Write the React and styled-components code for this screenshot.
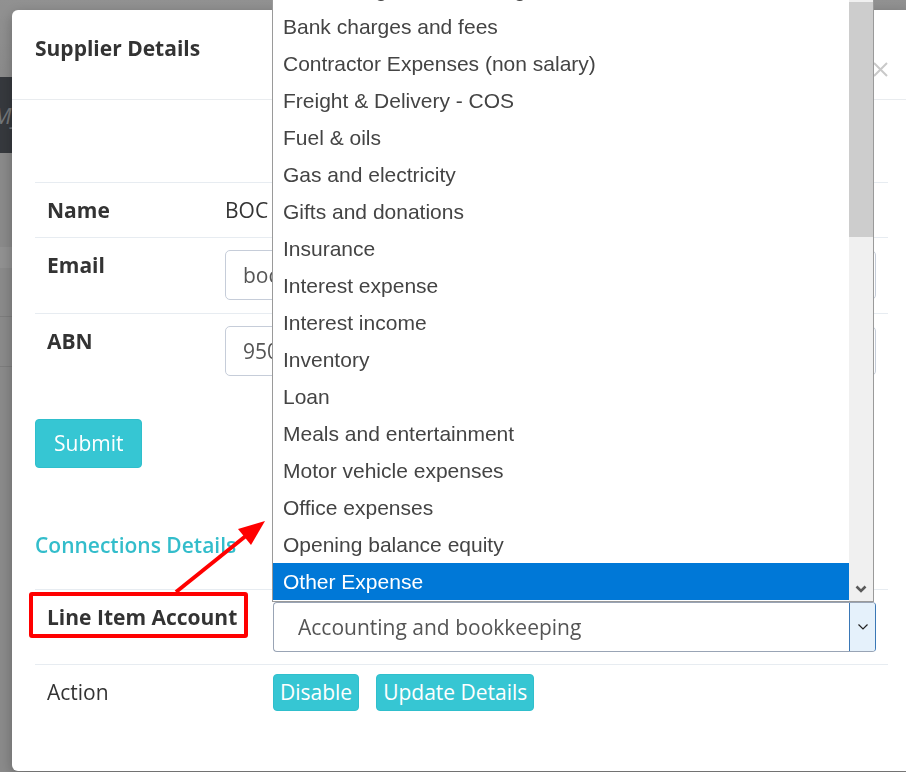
import * as React from 'react';
import styled, { createGlobalStyle } from 'styled-components';


const GlobalStyle = createGlobalStyle`
  html, body {
    margin: 0;
    padding: 0;
    width: 906px;
    height: 772px;
    overflow: hidden;
    font-family: "Open Sans", "Liberation Sans", sans-serif;
  }

  * {
    box-sizing: border-box;
  }
`;

const ACCOUNTS = [
  'Advertising and marketing',
  'Bank charges and fees',
  'Contractor Expenses (non salary)',
  'Freight & Delivery - COS',
  'Fuel & oils',
  'Gas and electricity',
  'Gifts and donations',
  'Insurance',
  'Interest expense',
  'Interest income',
  'Inventory',
  'Loan',
  'Meals and entertainment',
  'Motor vehicle expenses',
  'Office expenses',
  'Opening balance equity',
  'Other Expense',
];


// page sitting behind the modal backdrop
const Page = styled.div`
  width: 906px;
  height: 772px;
  background-color: #f2f2f2;
`;

const PageTop = styled.div`
  height: 77px;
  background: linear-gradient(#ffffff, #f4f4f4);
`;

const Navbar = styled.div`
  display: flex;
  align-items: center;
  height: 76px;
  background-color: #5f646c;
  color: #cdd1d6;
  font-size: 22px;
  font-style: italic;

  span {
    margin-left: -7px;
  }
`;

const PageRow = styled.div`
  height: ${props => props.h}px;
  background-color: ${props => (props.light ? '#ffffff' : '#f2f2f2')};
  border-bottom: ${props => (props.line ? '1px solid #dcdcdc' : 'none')};
`;

const Backdrop = styled.div`
  position: fixed;
  inset: 0;
  overflow: hidden;
  background-color: rgba(0, 0, 0, 0.43);
  padding-top: 10px;
  padding-left: 12px;
`;

const Modal = styled.div`
  width: 899px;
  height: 761px;
  background-color: #ffffff;
  border-radius: 6px;
  box-shadow: 0 4px 14px rgba(0, 0, 0, 0.25);
  color: #333333;
`;

const Header = styled.div`
  display: flex;
  justify-content: space-between;
  align-items: flex-start;
  height: 90px;
  padding-top: 24px;
  padding-right: 23px;
  padding-left: 23px;
  border-bottom: 1px solid #e9ecef;
`;

const Title = styled.h4`
  margin: 0;
  font-size: 21px;
  font-weight: 700;
  line-height: 28px;
  color: #333333;
`;

const Close = styled.button`
  display: flex;
  width: 15px;
  height: 15px;
  padding: 0;
  margin-top: 28px;
  border: 0;
  background: none;
`;

const Body = styled.div`
  padding-top: 82px;
  padding-right: 23px;
  padding-left: 23px;
`;

const Table = styled.div`
  display: grid;
  grid-template-columns: ${props => props.labelWidth}px 1fr;
`;

const Cell = styled.div`
  position: relative;
  padding-top: ${props => props.pad || 12}px;
  padding-right: 12px;
  padding-bottom: ${props => props.padBottom || props.pad || 12}px;
  padding-left: 12px;
  border-top: 1px solid #e7ecf1;
  font-size: 21px;
  line-height: ${props => props.lh || 30}px;
  font-weight: ${props => (props.bold ? 700 : 400)};
  color: #333333;
`;

const Input = styled.div`
  height: 50px;
  border: 1px solid #c6cdd9;
  border-radius: 5px;
  padding-left: 17px;
  font-size: 21px;
  line-height: 48px;
  color: #555555;
  white-space: nowrap;
  overflow: hidden;
`;

const Button = styled.button`
  font-family: "Open Sans", "Liberation Sans", sans-serif;
  font-size: 21px;
  line-height: 31px;
  color: #ffffff;
  background-color: #36c6d3;
  border: 1px solid #2fbfcc;
  border-radius: 4px;
  padding: ${props => (props.small ? '2px 6px' : '8px 18px')};
  cursor: pointer;
`;

const SubmitRow = styled.div`
  margin-top: 31px;
`;

const SectionTitle = styled.h3`
  margin-top: 62px;
  margin-bottom: 28px;
  font-size: 21px;
  font-weight: 600;
  line-height: 31px;
  color: #33bdcb;
`;

const Highlight = styled.span`
  position: absolute;
  top: 2px;
  left: -6px;
  width: 219px;
  height: 46px;
  border: 4px solid #ff0000;
  border-radius: 3px;
`;

const SelectWrap = styled.div`
  position: relative;
`;

const Select = styled.div`
  display: flex;
  height: 50px;
  border: 1px solid #99a4b5;
  border-right-color: #3a78b6;
  border-radius: 4px;
  font-size: 21px;
  color: #555555;
`;

const SelectValue = styled.div`
  flex: 1;
  padding-left: 24px;
  line-height: 48px;
`;

const SelectArrow = styled.div`
  display: flex;
  align-items: center;
  justify-content: center;
  width: 26px;
  background-color: #e5f1fb;
  border-left: 1px solid #3a78b6;
  border-radius: 0 3px 3px 0;
`;

const Popup = styled.div`
  position: absolute;
  bottom: 100%;
  left: -1px;
  z-index: 5;
  display: flex;
  width: 602px;
  height: 602px;
  overflow: hidden;
  background-color: #ffffff;
  border: 1px solid #9a9a9a;
  border-top: 0;
`;

const List = styled.ul`
  flex: 1;
  margin: -29px 0 0 0;
  padding: 0;
  list-style: none;
`;

const Option = styled.li`
  height: 37px;
  padding-left: 10px;
  font-family: "Liberation Sans", Arial, sans-serif;
  font-size: 21px;
  line-height: 37px;
  white-space: nowrap;
  color: ${props => (props.active ? '#ffffff' : '#444444')};
  background-color: ${props => (props.active ? '#0078d7' : 'transparent')};
`;

const Scrollbar = styled.div`
  display: flex;
  flex-direction: column;
  width: 24px;
  padding-top: 2px;
  background-color: #f0f0f0;
`;

const Thumb = styled.div`
  height: 235px;
  background-color: #cdcdcd;
`;

const ScrollDown = styled.div`
  display: flex;
  align-items: center;
  justify-content: center;
  height: 24px;
  margin-top: auto;
`;

const Actions = styled.div`
  display: flex;
  gap: 17px;
`;

const Annotation = styled.svg`
  position: absolute;
  top: 0;
  left: 0;
  z-index: 10;
  pointer-events: none;
`;


const Chevron = ({ bold }) => (
  <svg width="12" height="8" viewBox="0 0 12 8">
    <path
      d="M1.5 1.5 L6 6 L10.5 1.5"
      fill="none"
      stroke={ bold ? '#5a5a5a' : '#222222' }
      strokeWidth={ bold ? 2.6 : 1.2 }
    />
  </svg>
);


export default function App() {

  return (
    <>
      <GlobalStyle/>

      <Page>
        <PageTop/>
        <Navbar><span>My</span></Navbar>
        <PageRow h={ 94 }/>
        <PageRow h={ 21 } light/>
        <PageRow h={ 49 } line/>
        <PageRow h={ 50 } line/>
      </Page>

      <Backdrop>
        <Modal>
          <Header>
            <Title>Supplier Details</Title>
            <Close aria-label="Close">
              <svg width="15" height="15" viewBox="0 0 15 15">
                <path d="M1 1 L14 14 M14 1 L1 14" stroke="#c9c9c9" strokeWidth="2"/>
              </svg>
            </Close>
          </Header>

          <Body>
            <Table labelWidth={ 178 }>
              <Cell bold>Name</Cell>
              <Cell>BOC Limited</Cell>

              <Cell bold padBottom={ 13 }>Email</Cell>
              <Cell padBottom={ 13 }><Input>boc@boc.com.au</Input></Cell>

              <Cell bold>ABN</Cell>
              <Cell><Input>95000024785</Input></Cell>
            </Table>

            <SubmitRow>
              <Button>Submit</Button>
            </SubmitRow>

            <SectionTitle>Connections Details</SectionTitle>

            <Table labelWidth={ 226 }>
              <Cell bold lh={ 31 }>
                <Highlight/>
                Line Item Account
              </Cell>
              <Cell>
                <SelectWrap>
                  <Popup>
                    <List>
                      { ACCOUNTS.map(name => (
                        <Option key={ name } active={ name === 'Other Expense' }>{ name }</Option>
                      )) }
                    </List>
                    <Scrollbar>
                      <Thumb/>
                      <ScrollDown><Chevron bold/></ScrollDown>
                    </Scrollbar>
                  </Popup>

                  <Select>
                    <SelectValue>Accounting and bookkeeping</SelectValue>
                    <SelectArrow><Chevron/></SelectArrow>
                  </Select>
                </SelectWrap>
              </Cell>

              <Cell pad={ 9 } lh={ 37 }>Action</Cell>
              <Cell pad={ 9 } lh={ 37 }>
                <Actions>
                  <Button small>Disable</Button>
                  <Button small>Update Details</Button>
                </Actions>
              </Cell>
            </Table>
          </Body>
        </Modal>

        <Annotation width="906" height="772" viewBox="0 0 906 772">
          <line x1="176" y1="592" x2="247" y2="535" stroke="#ff0000" strokeWidth="4"/>
          <polygon points="265,521 251,545 238,529" fill="#ff0000"/>
        </Annotation>
      </Backdrop>
    </>
  );
}
